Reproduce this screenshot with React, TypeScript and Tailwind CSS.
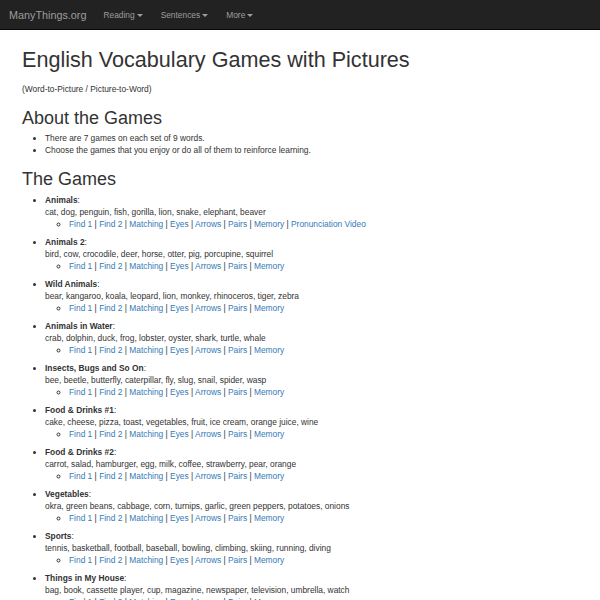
import React from "react";

type Topic = { name: string; words: string; video?: boolean };

const topics: Topic[] = [
  { name: "Animals", words: "cat, dog, penguin, fish, gorilla, lion, snake, elephant, beaver", video: true },
  { name: "Animals 2", words: "bird, cow, crocodile, deer, horse, otter, pig, porcupine, squirrel" },
  { name: "Wild Animals", words: "bear, kangaroo, koala, leopard, lion, monkey, rhinoceros, tiger, zebra" },
  { name: "Animals in Water", words: "crab, dolphin, duck, frog, lobster, oyster, shark, turtle, whale" },
  { name: "Insects, Bugs and So On", words: "bee, beetle, butterfly, caterpillar, fly, slug, snail, spider, wasp" },
  { name: "Food & Drinks #1", words: "cake, cheese, pizza, toast, vegetables, fruit, ice cream, orange juice, wine" },
  { name: "Food & Drinks #2", words: "carrot, salad, hamburger, egg, milk, coffee, strawberry, pear, orange" },
  { name: "Vegetables", words: "okra, green beans, cabbage, corn, turnips, garlic, green peppers, potatoes, onions" },
  { name: "Sports", words: "tennis, basketball, football, baseball, bowling, climbing, skiing, running, diving" },
  { name: "Things in My House", words: "bag, book, cassette player, cup, magazine, newspaper, television, umbrella, watch" },
];

const games = ["Find 1", "Find 2", "Matching", "Eyes", "Arrows", "Pairs", "Memory"];

function Caret() {
  return <span className="ml-[2px] inline-block h-0 w-0 border-x-[3px] border-t-[3px] border-x-transparent border-t-[#9d9d9d] align-middle" />;
}

export default function App() {
  return (
    <div className="min-h-screen bg-white text-[8.4px] leading-[12px] text-[#333]" style={{ fontFamily: '"Liberation Sans", Arial, sans-serif' }}>
      {/* navbar */}
      <nav className="flex h-[30px] items-center border-b border-[#080808] bg-[#222] text-[#9d9d9d]">
        <a className="pl-[9px] pr-[8px] text-[10.8px]">ManyThings.org</a>
        <a className="px-[9px]">Reading<Caret /></a>
        <a className="px-[9px]">Sentences<Caret /></a>
        <a className="px-[9px]">More<Caret /></a>
      </nav>

      <div className="px-[22px]">
        <h1 className="mt-[18px] text-[21.6px] leading-[24px]">English Vocabulary Games with Pictures</h1>
        <p className="mt-[11px]">(Word-to-Picture / Picture-to-Word)</p>

        <h2 className="mt-[13px] text-[18px] leading-[20px]">About the Games</h2>
        <ul className="mt-[5px] list-disc pl-[23px]">
          <li className="leading-[11.5px]">There are 7 games on each set of 9 words.</li>
          <li className="leading-[11.5px]">Choose the games that you enjoy or do all of them to reinforce learning.</li>
        </ul>

        <h2 className="mt-[13px] text-[18px] leading-[20px]">The Games</h2>
        <ul className="mt-[5px] list-disc pl-[23px]">
          {topics.map((t) => (
            <li key={t.name} className="mb-[6px]">
              <b>{t.name}</b>:
              <br />
              {t.words}
              <ul className="list-[circle] pl-[24px]">
                <li>
                  {games.map((g, i) => (
                    <span key={g}>
                      {i > 0 && " | "}
                      <a className="text-[#337ab7]">{g}</a>
                    </span>
                  ))}
                  {t.video && (
                    <>
                      {" | "}
                      <a className="text-[#337ab7]">Pronunciation Video</a>
                    </>
                  )}
                </li>
              </ul>
            </li>
          ))}
        </ul>
      </div>
    </div>
  );
}
